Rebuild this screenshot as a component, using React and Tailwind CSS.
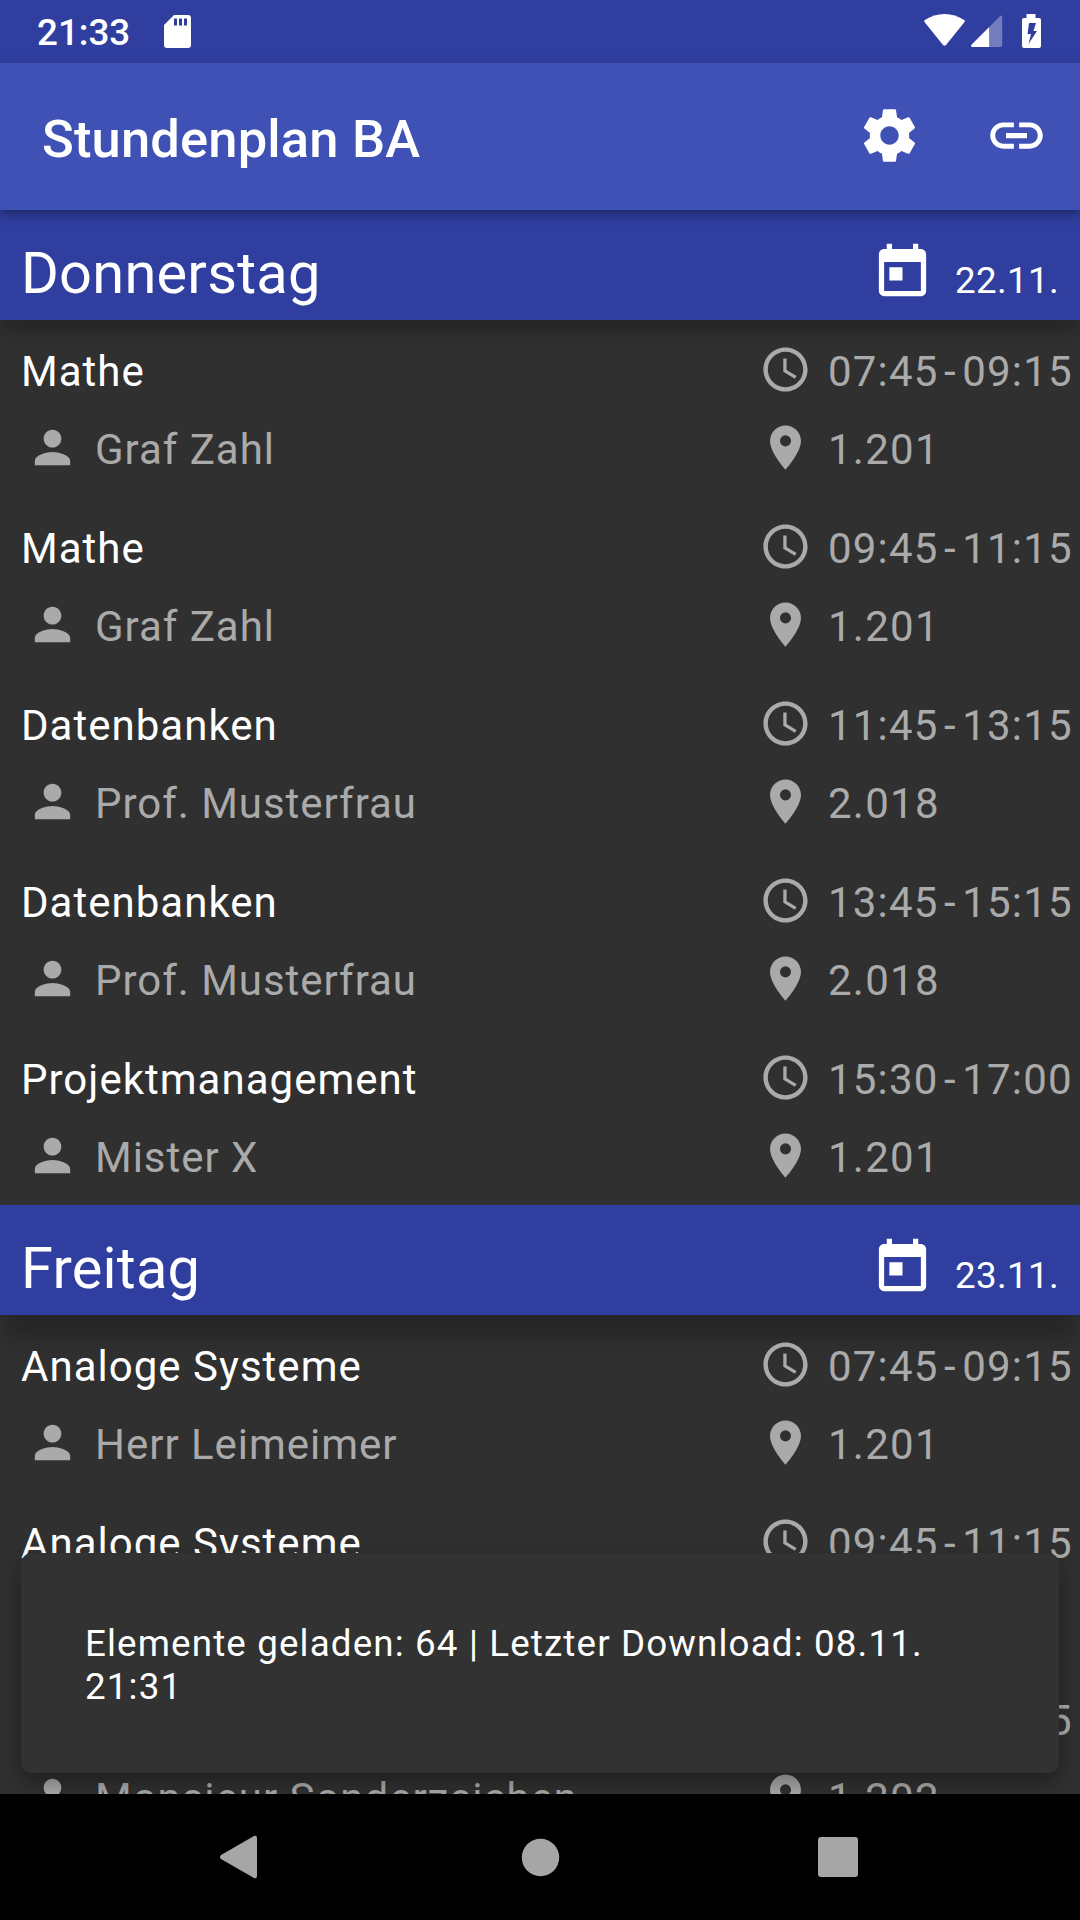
import { MdAccessTime, MdPlace, MdPerson, MdToday, MdLink } from "react-icons/md";

const days = [
  {
    name: "Donnerstag",
    date: "22.11.",
    shadow: "shadow-[0_14px_16px_-2px_rgba(0,0,0,0.22)]",
    lessons: [
      ["Mathe", "Graf Zahl", "07:45", "09:15", "1.201"],
      ["Mathe", "Graf Zahl", "09:45", "11:15", "1.201"],
      ["Datenbanken", "Prof. Musterfrau", "11:45", "13:15", "2.018"],
      ["Datenbanken", "Prof. Musterfrau", "13:45", "15:15", "2.018"],
      ["Projektmanagement", "Mister X", "15:30", "17:00", "1.201"],
    ],
  },
  {
    name: "Freitag",
    date: "23.11.",
    shadow: "shadow-[0_28px_18px_-4px_rgba(0,0,0,0.2)]",
    lessons: [
      ["Analoge Systeme", "Herr Leimeimer", "07:45", "09:15", "1.201"],
      ["Analoge Systeme", "Herr Leimeimer", "09:45", "11:15", "1.201"],
      ["Elektrotechnik", "Monsieur Sonderzeichen", "11:45", "13:15", "1.202"],
    ],
  },
];

function StatusBar() {
  return (
    <div className="flex h-[63px] shrink-0 items-center bg-[#303f9f] pl-[37px] text-white">
      <span className="w-[127px] pt-[3px] text-[36.75px] leading-[66px] font-medium">21:33</span>
      <svg className="h-[33px] w-[27px]" viewBox="0 0 27 33" fill="currentColor">
        <path fillRule="evenodd" d="M10 0H24Q27 0 27 3V30Q27 33 24 33H3Q0 33 0 30V10ZM10 3.500V10.500H13V3.500ZM15 3.500V10.500H18V3.500ZM20 3.500V10.500H23V3.500Z" />
      </svg>
      <svg className="mb-px ml-auto h-[34px] w-[118px]" viewBox="0 0 118 34" fill="currentColor">
        <path d="M0.500 8Q-.3 7 .8 6Q10 0 20.500 0T40.200 6Q41.300 7 40.500 8L22 31Q20.500 32.500 19 31Z" />
        <g transform="translate(0.7 0)">
          <path d="M77.500 2V31Q77.500 33 75.500 33H64.500V13L75 2.500Q77 1 77.500 2Z" opacity=".32" />
          <path d="M64.500 13V33H48Q45 32.500 47 30.500Z" />
        </g>
        <path fillRule="evenodd" d="M102.500 0H111.500V4H115Q117 4 117 6V32Q117 34 115 34H100Q98 34 98 32V6Q98 4 100 4H102.500ZM105 9L103.500 20H107L104.500 30L113 17H109.500L112 9Z" />
      </svg>
      <div className="w-[38px]" />
    </div>
  );
}

function AppBar() {
  return (
    <div className="relative z-20 flex h-[147px] shrink-0 items-center bg-[#3f51b5] pr-[32px] pl-[42px] text-white shadow-[0_4px_10px_rgba(0,0,0,0.38)]">
      <h1 className="grow pt-[5px] text-[52.5px] leading-[62px] font-medium tracking-[0.15px] whitespace-nowrap">Stundenplan BA</h1>
      <svg className="mr-[64px] mb-[2px] size-[63px]" viewBox="0 0 24 24" fill="currentColor">
        <path d="M19.43 12.98c.04-.32.07-.64.07-.98s-.03-.66-.07-.98l2.11-1.65c.19-.15.24-.42.12-.64l-2-3.46c-.12-.22-.39-.3-.61-.22l-2.49 1c-.52-.4-1.08-.73-1.69-.98l-.38-2.65C14.460 2.180 14.250 2 14 2h-4c-.25 0-.46.18-.49.42l-.38 2.650c-.61.25-1.170.59-1.690.98l-2.490-1c-.23-.09-.49 0-.61.22l-2 3.460c-.13.22-.07.49.12.64l2.110 1.650c-.04.32-.07.65-.07.98s.03.66.07.98l-2.110 1.650c-.19.15-.24.42-.12.64l2 3.460c.12.22.39.3.61.22l2.490-1c.52.4 1.080.73 1.690.98l.38 2.650c.03.24.24.42.49.42h4c.25 0 .46-.18.49-.42l.38-2.650c.61-.25 1.170-.59 1.690-.98l2.490 1c.23.09.49 0 .61-.22l2-3.460c.12-.22.07-.49-.12-.64l-2.110-1.650zM12 15.500c-1.930 0-3.500-1.570-3.500-3.500s1.570-3.500 3.500-3.500 3.500 1.570 3.500 3.500-1.570 3.500-3.500 3.500z" />
      </svg>
      <MdLink className="mb-[2px] size-[63px]" />
    </div>
  );
}

function DayHeader({ name, date, shadow }) {
  return (
    <div className={`relative z-10 flex h-[110px] items-start bg-[#303f9f] pl-[21px] text-white ${shadow}`}>
      <h2 className="grow pt-[29px] text-[57.75px] leading-[68px] tracking-[0.22px]">{name}</h2>
      <MdToday className="mt-[31px] size-[63px]" />
      <span className="mt-[49px] ml-[21px] w-[125px] text-[36.75px] leading-[44px] tracking-[0.35px]">{date}</span>
    </div>
  );
}

function Lesson({ lesson: [title, teacher, start, end, room] }) {
  return (
    <div className="grid h-[177px] grid-cols-[759px_1fr] grid-rows-[99px_78px] text-[42px] leading-[50px] tracking-[1.02px] text-[#aaaaaa]">
      <div className="pt-[27px] pl-[21px] text-white">{title}</div>
      <div className="flex items-start pt-[23px]">
        <MdAccessTime className="size-[53px]" />
        <div className="mt-[4px] ml-[16px] flex tracking-[1.2px] whitespace-nowrap">
          <span>{start}</span>
          <span className="mx-[5.4px]">-</span>
          <span>{end}</span>
        </div>
      </div>
      <div className="flex items-start pl-[26px]">
        <MdPerson className="mt-[2px] size-[53px]" />
        <span className="mt-[6px] ml-[16px] tracking-[0.97px] whitespace-nowrap">{teacher}</span>
      </div>
      <div className="flex items-start">
        <MdPlace className="mt-[2px] size-[53px]" />
        <span className="mt-[6px] ml-[16px] tracking-[1.25px]">{room}</span>
      </div>
    </div>
  );
}

function NavigationBar() {
  return (
    <div className="flex h-[126px] shrink-0 items-center justify-center bg-black text-[#a6a6a6]">
      <svg className="h-[126px] w-full" viewBox="0 0 1080 126" fill="currentColor">
        <path d="M257 44V82Q257 85 254 84L221 65Q219 63 221 61L254 42Q257 41 257 44Z" />
        <circle cx="540.500" cy="63.500" r="18.700" />
        <rect x="818" y="43" width="40" height="40" rx="3" />
      </svg>
    </div>
  );
}

export default function App() {
  return (
    <div className="flex h-[1920px] w-[1080px] flex-col overflow-hidden bg-[#303030] font-['Roboto',sans-serif]">
      <StatusBar />
      <AppBar />
      <div className="relative h-[1584px] shrink-0 overflow-hidden">
        {days.map((day) => (
          <section key={day.name}>
            <DayHeader name={day.name} date={day.date} shadow={day.shadow} />
            <div className="relative z-10">
              {day.lessons.map((lesson) => (
                <Lesson key={lesson[2]} lesson={lesson} />
              ))}
            </div>
          </section>
        ))}
        <div className="absolute inset-x-[21px] bottom-[21px] z-20 h-[220px] rounded-[11px] bg-[#323232] pt-[69px] pr-[63px] pl-[64px] text-[36.75px] leading-[43px] tracking-[1.14px] text-white shadow-[0_10px_22px_rgba(0,0,0,0.34)]">
          Elemente geladen: 64 | Letzter Download: 08.11. 21:31
        </div>
      </div>
      <NavigationBar />
    </div>
  );
}
